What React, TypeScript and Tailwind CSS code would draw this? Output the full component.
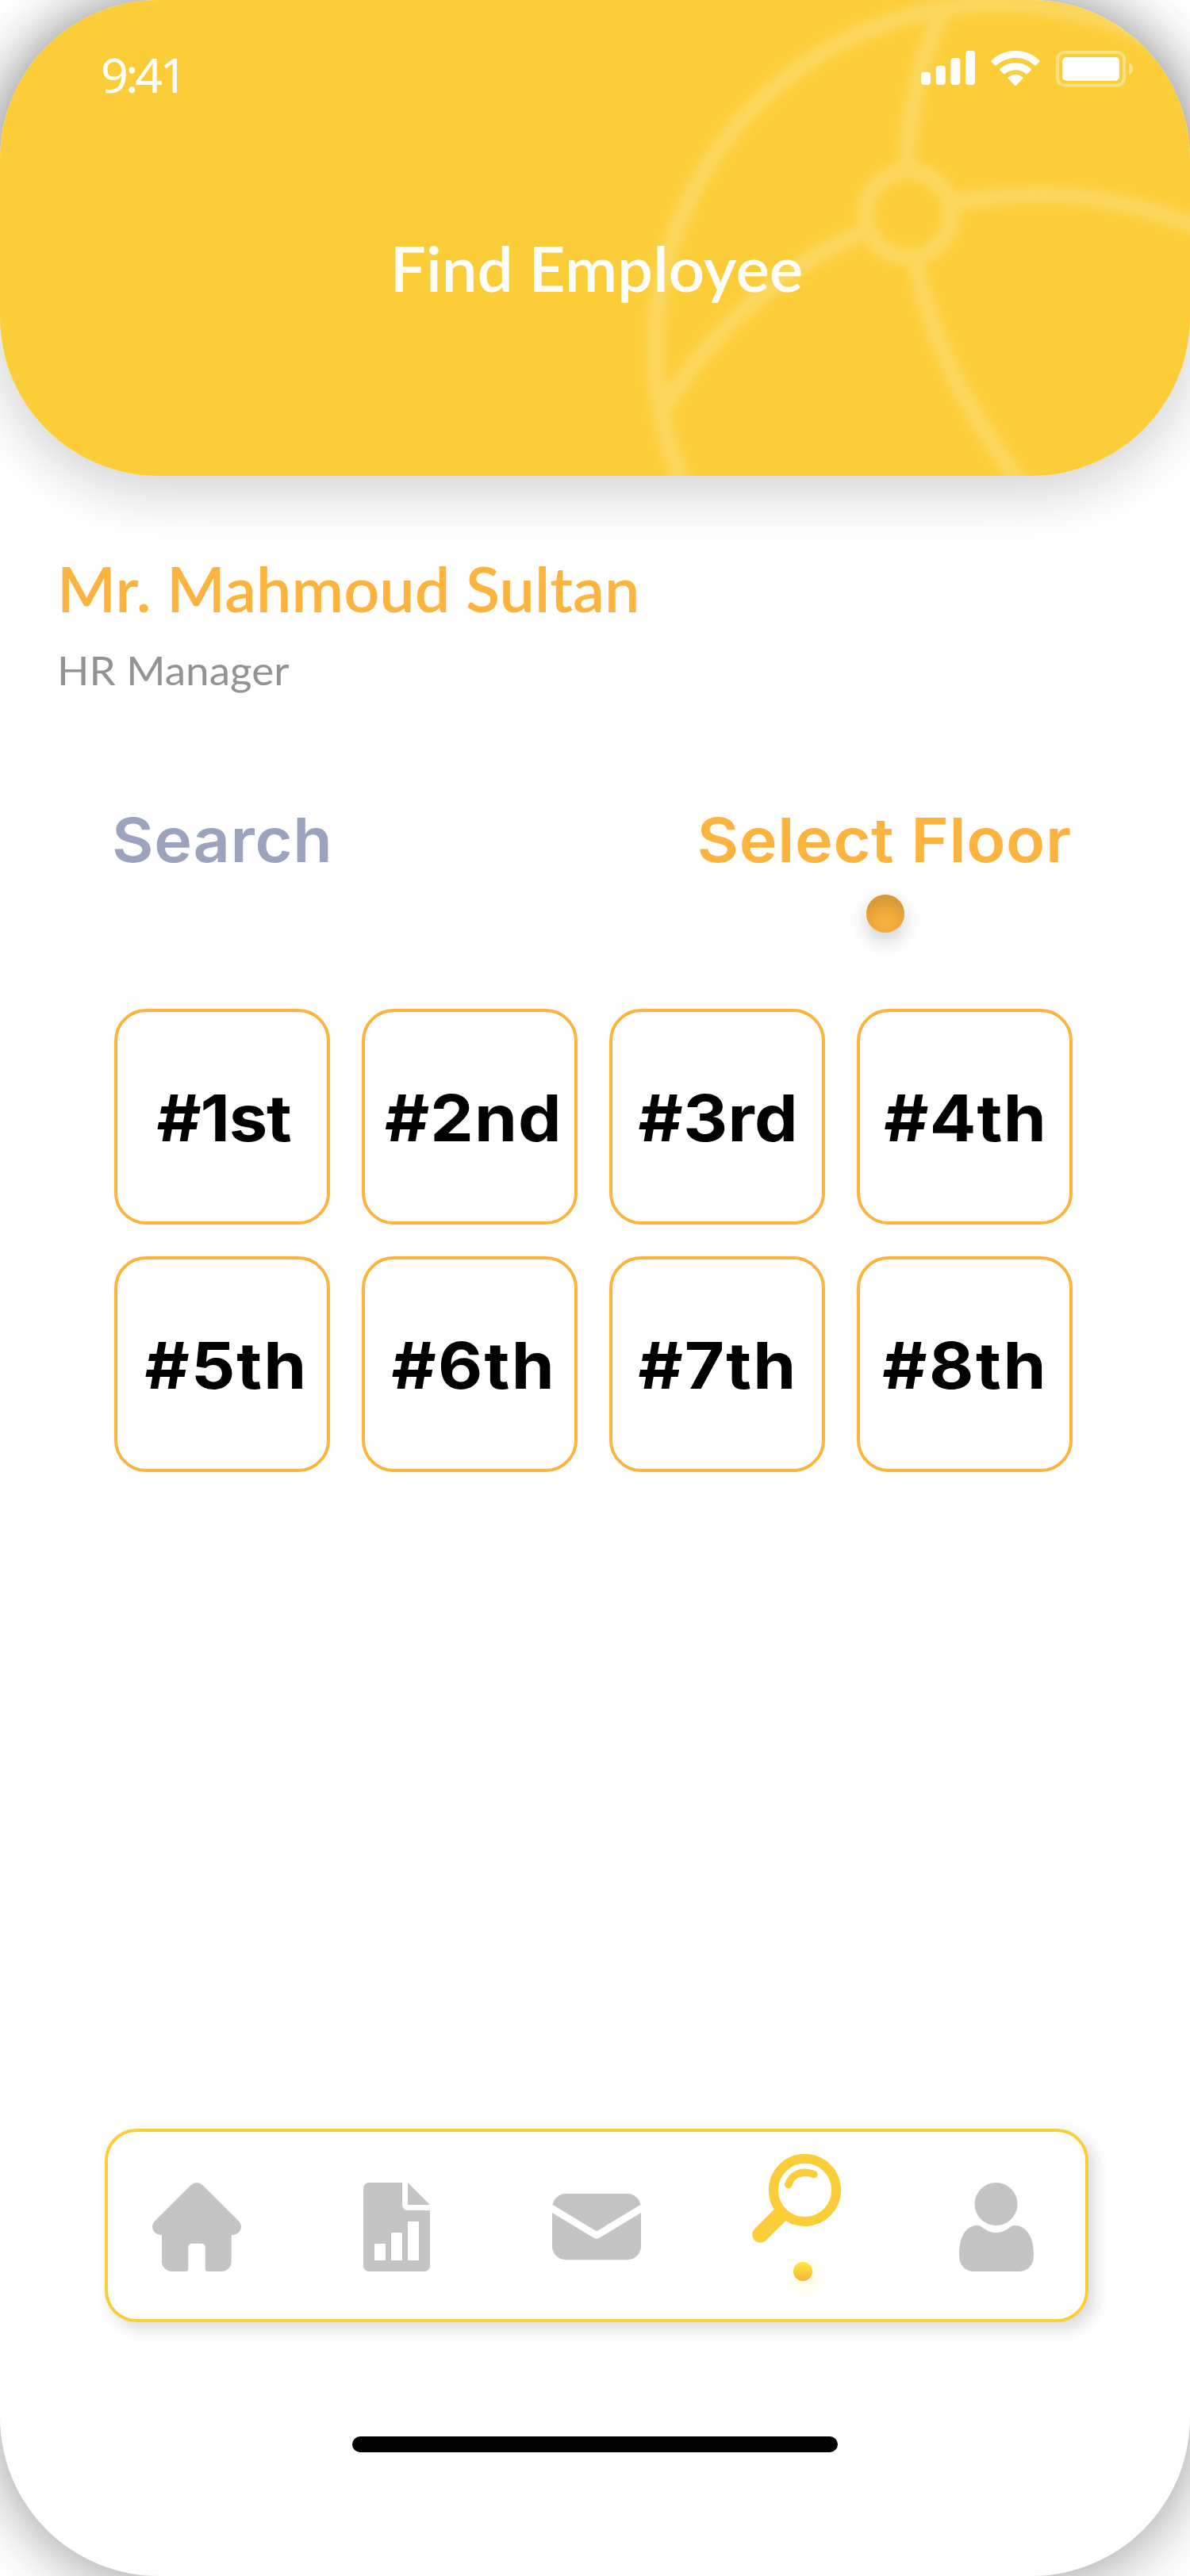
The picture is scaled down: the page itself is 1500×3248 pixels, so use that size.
type Floor = { label: string; className: string };

const floors: Floor[] = [
  { label: "#1st", className: "pl-1 tracking-[-1.2px]" },
  { label: "#2nd", className: "pl-2.5 tracking-[1px]" },
  { label: "#3rd", className: "pl-0.5 tracking-[0.4px]" },
  { label: "#4th", className: "pl-0.5 tracking-[1.1px]" },
  { label: "#5th", className: "pl-2.5 tracking-[1.9px]" },
  { label: "#6th", className: "pl-2.5 tracking-[2.1px]" },
  { label: "#7th", className: "pl-0.5 tracking-[1.9px]" },
  { label: "#8th", className: "pl-0.5 tracking-[2.4px]" },
];

function BallPattern() {
  return (
    <svg className="absolute inset-0" width="1500" height="600" viewBox="0 0 1500 600" fill="none">
      <defs>
        <filter id="soften" x="0" y="-50" width="1500" height="700" filterUnits="userSpaceOnUse">
          <feGaussianBlur stdDeviation="5.5" />
        </filter>
      </defs>
      <g stroke="#fff" strokeWidth="22" opacity="0.19" filter="url(#soften)">
        <circle cx="1260" cy="439" r="434" />
        <circle cx="1145" cy="270" r="54" />
        <path d="M1144 216C1143 150 1156 84 1190 8" />
        <path d="M1094 290C990 332 892 420 834 520" />
        <path d="M1198 256C1300 238 1400 240 1520 290" />
        <path d="M1153 324C1172 424 1212 508 1288 612" />
      </g>
    </svg>
  );
}

function SignalIcon() {
  return (
    <svg width="68" height="43" viewBox="0 0 68 43" fill="#fff">
      <rect x="0" y="26.7" width="12" height="16.3" rx="4" />
      <rect x="18.7" y="18.7" width="12" height="24.3" rx="4" />
      <rect x="37.3" y="9" width="12" height="34" rx="4" />
      <rect x="56" y="0" width="12" height="43" rx="4" />
    </svg>
  );
}

function WifiIcon() {
  return (
    <svg width="62" height="45" viewBox="0 0 62 45" fill="none">
      <path
        d="M31 0C42.400 0 53 4.200 61.200 12Q62.200 13 61.200 14L57 18.300Q56 19.200 55 18.300C48.500 12.300 40 9 31 9C22 9 13.500 12.300 7 18.300Q6 19.200 5 18.300L.8 14Q-.2 13 .8 12C9 4.200 19.600 0 31 0Z"
        fill="#fff"
      />
      <path
        d="M31 15C38.300 15 45 17.700 50.300 22.500Q51.300 23.500 50.300 24.500L46 29Q45 29.900 44 29C40.400 26 36 24.300 31 24.300C26 24.300 21.600 26 18 29Q17 29.900 16 29L11.700 24.500Q10.700 23.500 11.700 22.500C17 17.700 23.700 15 31 15Z"
        fill="#fff"
      />
      <path
        d="M31 30C34.500 30 37.500 31.200 40 33.300Q41 34.300 40 35.300L32 43.500Q31 44.500 30 43.500L22 35.300Q21 34.300 22 33.300C24.500 31.200 27.500 30 31 30Z"
        fill="#fff"
      />
    </svg>
  );
}

function BatteryIcon() {
  return (
    <svg width="98" height="46" viewBox="0 0 98 46" fill="none">
      <rect x="2" y="2" width="84" height="41.500" rx="9" stroke="#fff" strokeWidth="4" opacity="0.37" />
      <rect x="8" y="8" width="72" height="29.700" rx="5" fill="#fff" />
      <path d="M92 15Q97 17.500 97 22.700T92 30.500Z" fill="#fff" opacity="0.42" />
    </svg>
  );
}

function HomeIcon() {
  return (
    <svg className="ml-14 mt-16" width="112" height="112" viewBox="0 0 112 112" fill="#c4c4c4">
      <path d="M48.500 3.300Q56-3.200 63.500 3.300L108.500 48Q112 51.500 112 56A10.500 10.500 0 0 1 101.500 66H99.700V99.500A12.500 12.500 0 0 1 87.500 112H70Q66.800 112 66.800 109V82.500Q66.800 76.700 61 76.700H51Q45.200 76.700 45.200 82.500V109Q45.200 112 42 112H24.500A12.500 12.500 0 0 1 12 99.500V66H10.500A10.500 10.500 0 0 1 0 56Q0 51.500 3.500 48Z" />
    </svg>
  );
}

function ReportIcon() {
  return (
    <svg className="ml-[154px] mt-16" width="84" height="112" viewBox="0 0 84 112" fill="#c4c4c4">
      <path
        fillRule="evenodd"
        d="M7 0H49V28A7 7 0 0 0 56 35H84V105A7 7 0 0 1 77 112H7A7 7 0 0 1 0 105V7A7 7 0 0 1 7 0ZM14 77V98H28V77ZM35 63V98H49V63ZM56 49V98H70V49Z"
      />
      <path d="M56 0L84 28H56Z" />
    </svg>
  );
}

function MailIcon() {
  return (
    <svg className="ml-[154px] mt-[78px]" width="112" height="84" viewBox="0 0 112 84" fill="#c4c4c4">
      <path d="M0.400 13.700A17 17 0 0 1 17 0H95A17 17 0 0 1 111.600 13.700L58 46.200Q56 47.200 54 46.200Z" />
      <path d="M0 24L53 56Q56 57.500 59 56L112 24V66.500A17 17 0 0 1 95 83.200H17A17 17 0 0 1 0 66.500Z" />
    </svg>
  );
}

function SearchIcon() {
  return (
    <svg width="112" height="112" viewBox="0 0 112 112" fill="none" stroke="#fbce39">
      <circle cx="66.500" cy="45.400" r="39.600" strokeWidth="12" />
      <path d="M38 74L10.400 101.600" strokeWidth="20.500" />
      <circle cx="10.400" cy="101.600" r="5.100" strokeWidth="10.300" />
      <path d="M45.700 38.500C49.500 26.500 61 19.500 78 25.500" strokeWidth="9.300" strokeLinecap="round" />
    </svg>
  );
}

function ProfileIcon() {
  return (
    <svg className="ml-[149px] mt-16" width="94" height="112" viewBox="0 0 94 112" fill="#c4c4c4">
      <circle cx="46.500" cy="27" r="27" />
      <path d="M23 54Q26 53.500 28.500 56C40 65.500 53 65.500 64.500 56Q67 53.500 70 54C86 54 94 71 94 91C94 105 86 112 75 112H19C8 112 0 105 0 91C0 71 7 54 23 54Z" />
    </svg>
  );
}

export default function App() {
  return (
    <div className="h-[3248px] w-[1500px] overflow-hidden bg-white">
      <div className="flex h-[3248px] flex-col rounded-[200px] bg-white shadow-[0_4px_80px_rgba(0,0,0,0.42)]">
        <header className="relative h-[600px] shrink-0 overflow-hidden rounded-[200px] bg-[#fbce39]">
          <BallPattern />
          <div className="relative flex h-[299px] items-start justify-between pl-[127px] pr-[71px]">
            <span className="pt-[63px] font-['Noto_Sans',sans-serif] text-[61px] leading-none tracking-[-4px] text-white">
              9:41
            </span>
            <div className="flex items-start gap-5 pt-16">
              <SignalIcon />
              <WifiIcon />
              <BatteryIcon />
            </div>
          </div>
          <h1 className="relative scale-x-[1.025] pl-1 text-center font-['Lato',sans-serif] text-[78px] font-semibold leading-none text-white">
            Find Employee
          </h1>
        </header>
        <section className="-mt-[600px] h-[600px] shrink-0 rounded-[200px] shadow-[0_16px_80px_rgba(0,0,0,0.2)]" />

        <section className="pl-[72px] pt-[103px] font-['Lato',sans-serif]">
          <h2 className="origin-left scale-x-[1.015] text-[78px] font-semibold leading-none text-[#fcb43f]">
            Mr. Mahmoud Sultan
          </h2>
          <p className="origin-left scale-x-[1.04] pt-[38px] text-[51px] leading-none text-[#939393]">HR Manager</p>
        </section>

        <div className="flex justify-between pl-[141px] pr-[149px] pt-[151px] font-['Inter',sans-serif] text-[77px] font-semibold leading-none">
          <span className="origin-left scale-x-105 tracking-[0.6px] text-[#9ba3bf]">Search</span>
          <div className="flex flex-col items-end">
            <span className="origin-right scale-x-105 tracking-[0.6px] text-[#fcb43f]">Select Floor</span>
            <span className="mt-[30px] mr-[211px] size-12 rounded-full bg-[#fcb43f] shadow-[0_10px_24px_rgba(0,0,0,0.2),inset_0_12px_24px_rgba(0,0,0,0.17)]" />
          </div>
        </div>

        <div className="grid grid-cols-4 gap-10 pl-36 pr-[148px] pt-24">
          {floors.map((floor) => (
            <button
              key={floor.label}
              className="flex size-[272px] items-center justify-center rounded-[40px] border-4 border-[#fcb43f] bg-white pt-[5px] font-['Inter',sans-serif] text-[81px] font-bold leading-none text-black"
            >
              <span className="scale-x-[1.07]">
                <span className={floor.className}>{floor.label}</span>
              </span>
            </button>
          ))}
        </div>

        <nav className="mt-[828px] ml-[132px] flex h-[244px] w-[1240px] shrink-0 items-start rounded-[40px] border-4 border-[#fbce39] bg-white shadow-[8px_8px_20px_rgba(0,0,0,0.15)]">
          <HomeIcon />
          <ReportIcon />
          <MailIcon />
          <div className="ml-[140px] mt-7 flex flex-col items-center">
            <SearchIcon />
            <span className="mt-6 ml-4 size-6 rounded-full bg-linear-to-b from-[#f9ed32] to-[#fbb040] shadow-[4px_8px_20px_rgba(249,237,50,0.3)]" />
          </div>
          <ProfileIcon />
        </nav>

        <div className="mx-auto mt-36 h-5 w-[612px] shrink-0 rounded-[10px] bg-black" />
      </div>
    </div>
  );
}
